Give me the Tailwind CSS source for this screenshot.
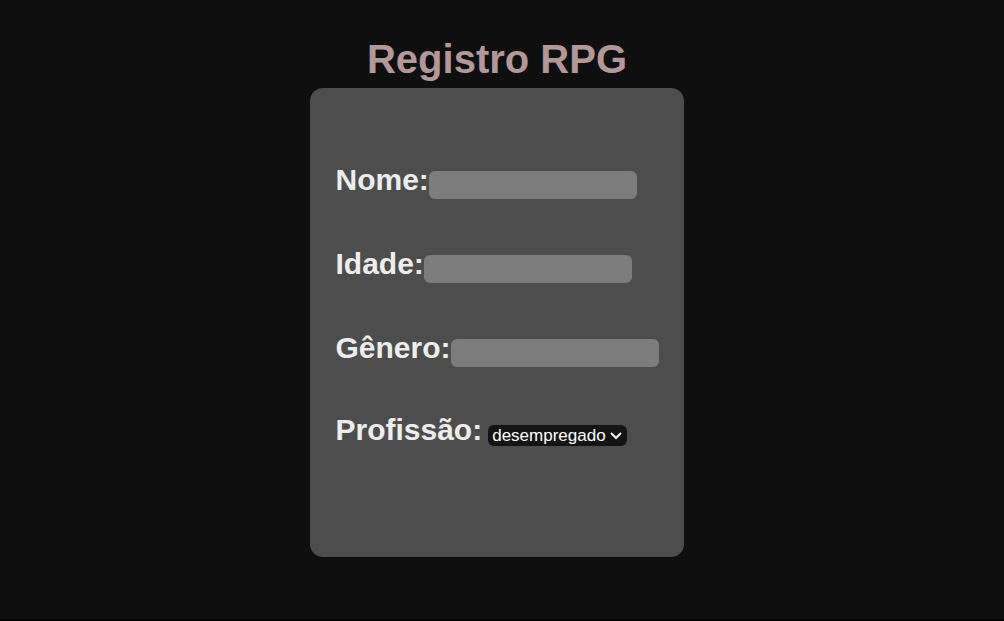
<!DOCTYPE html>
<html lang="pt-BR">
<head>
<meta charset="utf-8">
<meta name="viewport" content="width=device-width, initial-scale=1">
<title>Registro RPG</title>
<script src="https://cdn.jsdelivr.net/npm/@tailwindcss/browser@4"></script>
</head>
<body class="flex min-h-screen flex-col border-b-2 border-[#080003] bg-[#0f0f0f] font-['Liberation_Sans',Arial,sans-serif]">
<main class="flex flex-col items-center pt-9 pr-2.5">
  <h1 class="text-[40px] leading-[46px] font-bold text-[#b29898]">Registro RPG</h1>
  <form class="mt-1.5 flex flex-col gap-[46px] rounded-[13px] bg-[#4d4d4d] px-[25px] pt-[73px] pb-[110px] text-[30px] leading-[34px] font-bold text-[#ededed]">
    <div class="flex items-center">
      <label for="nome">Nome:</label>
      <input id="nome" type="text" class="mt-2.5 h-7 w-52 rounded-md bg-[#7c7c7c] px-1 text-base font-normal">
    </div>
    <div class="flex items-center">
      <label for="idade">Idade:</label>
      <input id="idade" type="text" class="mt-2.5 h-7 w-52 rounded-md bg-[#7c7c7c] px-1 text-base font-normal">
    </div>
    <div class="flex items-center">
      <label for="genero">Gênero:</label>
      <input id="genero" type="text" class="mt-2.5 h-7 w-52 rounded-md bg-[#7c7c7c] px-1 text-base font-normal">
    </div>
    <div class="flex items-center">
      <label for="profissao">Profissão:</label>
      <div class="relative mt-[11px] ml-1.5 flex">
        <select id="profissao" class="h-[21px] w-[139px] appearance-none rounded-md bg-[#141414] pl-1 text-[17px] leading-[21px] font-normal text-white">
          <option>desempregado</option>
        </select>
        <svg class="pointer-events-none absolute top-[7px] right-[5px] h-2 w-3" viewBox="0 0 12 8" fill="none" stroke="#f5f5f5" stroke-width="2" aria-hidden="true"><path d="M1 1 6 6 11 1"/></svg>
      </div>
    </div>
  </form>
</main>
</body>
</html>
